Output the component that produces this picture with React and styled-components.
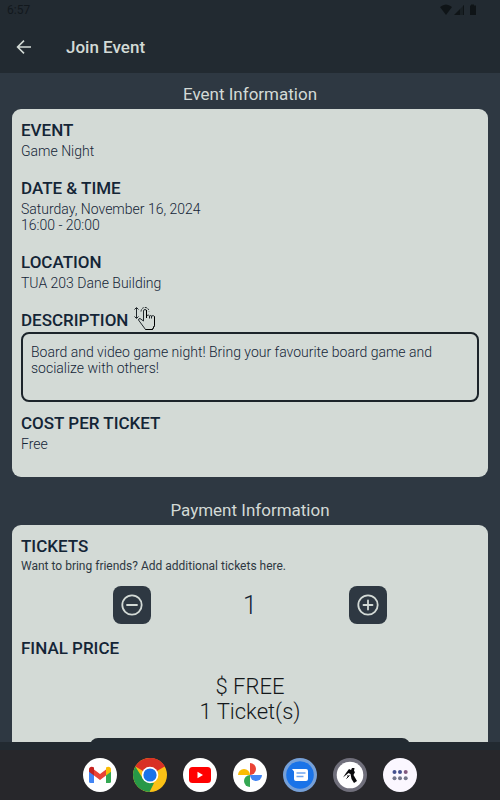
import React, { useState } from 'react'
import styled, { createGlobalStyle } from 'styled-components'

const App = () => {
    const [tickets, setTickets] = useState(1)
    return (
        <Screen>
            <GlobalStyle />
            <Header>
                <StatusBar>
                    <span>6:57</span>
                    <StatusIcons />
                </StatusBar>
                <TitleBar>
                    <BackButton type="button" aria-label="Back">
                        <svg width="16" height="16" viewBox="0 0 16 16" fill="none" stroke="#d3dad6" strokeWidth="1.6">
                            <path d="M15 8H2M8 1.6L1.6 8L8 14.4" />
                        </svg>
                    </BackButton>
                    <h1>Join Event</h1>
                </TitleBar>
            </Header>
            <Content>
                <SectionTitle>Event Information</SectionTitle>
                <Card>
                    <Label>EVENT</Label>
                    <Value>Game Night</Value>
                    <Label>DATE &amp; TIME</Label>
                    <Value>Saturday, November 16, 2024<br />16:00 - 20:00</Value>
                    <Label>LOCATION</Label>
                    <Value>TUA 203 Dane Building</Value>
                    <Label>
                        DESCRIPTION
                        <TouchCursor />
                    </Label>
                    <Description>Board and video game night! Bring your favourite board game and socialize with others!</Description>
                    <Label>COST PER TICKET</Label>
                    <Value>Free</Value>
                </Card>
                <SectionTitle>Payment Information</SectionTitle>
                <Card>
                    <Label>TICKETS</Label>
                    <Hint>Want to bring friends? Add additional tickets here.</Hint>
                    <Stepper>
                        <StepButton type="button" aria-label="Remove ticket" onClick={() => setTickets(Math.max(1, tickets - 1))}>
                            <svg width="22" height="22" viewBox="0 0 22 22" fill="none" stroke="#d3dad6" strokeWidth="1.8" strokeLinecap="round">
                                <circle cx="11" cy="11" r="9.7" />
                                <path d="M6 11H16" />
                            </svg>
                        </StepButton>
                        <Count>{tickets}</Count>
                        <StepButton type="button" aria-label="Add ticket" onClick={() => setTickets(tickets + 1)}>
                            <svg width="22" height="22" viewBox="0 0 22 22" fill="none" stroke="#d3dad6" strokeWidth="1.8" strokeLinecap="round">
                                <circle cx="11" cy="11" r="9.7" />
                                <path d="M6.500 11H15.500M11 6.500V15.500" />
                            </svg>
                        </StepButton>
                    </Stepper>
                    <Label>FINAL PRICE</Label>
                    <Total>$ FREE<br />{tickets} Ticket(s)</Total>
                    <JoinButton type="button" aria-label="Join" />
                </Card>
            </Content>
            <TabStrip />
            <Dock>
                <DockButton type="button" aria-label="Gmail"><GmailLogo /></DockButton>
                <DockButton type="button" aria-label="Chrome"><ChromeLogo /></DockButton>
                <DockButton type="button" aria-label="YouTube"><YoutubeLogo /></DockButton>
                <DockButton type="button" aria-label="Photos"><PhotosLogo /></DockButton>
                <DockButton type="button" aria-label="Messages"><MessagesLogo /></DockButton>
                <DockButton type="button" aria-label="Events"><EventsLogo /></DockButton>
                <DockButton type="button" aria-label="All apps"><AppsLogo /></DockButton>
            </Dock>
        </Screen>
    )
}

const StatusIcons = () => (
    <svg width="38" height="12" viewBox="0 0 38 12" fill="#0f1417">
        <path d="M0 3Q6 -2 12 3L6 11Z" />
        <path d="M14 11L20 5V11Z" />
        <path d="M20 5L24 1V11H20Z" opacity="0.45" />
        <path d="M23 2L24 1V11H23Z" />
        <path d="M31 0.5H34V1.5H36V11H30V1.5H31Z" />
    </svg>
)

// hand with the scroll arrow on its left
const TouchCursor = () => (
    <CursorSvg width="24" height="26" viewBox="0 0 24 26" fill="none" stroke="#20272b" strokeWidth="1">
        <path d="M2.500 2V12M0.500 3.500L2.500 1.500L4.500 3.500M0.500 10.500L2.500 12.500L4.500 10.500" />
        <path d="M7 5.500Q7.500 1.500 11 1.500Q14.500 1.500 15 5.500" strokeDasharray="2 1" />
        <path d="M9.500 15V5Q9.500 3.500 11 3.500Q12.500 3.500 12.500 5V12" fill="#d3dad6" />
        <path d="M9.500 15L6 12.500Q4.500 12.500 4.500 14L11.500 23.500H18.500L20.500 19.500V10.500Q19.500 9 17.500 10V12.500M12.500 12V9.500Q15 8.500 15.500 10V12.500M15.500 10Q17 9 17.500 10" />
        <path d="M12.500 4V12" stroke="#000" />
        <path d="M11.500 23.500H18.500L20.500 19.500V10.500" stroke="#000" />
    </CursorSvg>
)

const GmailLogo = () => (
    <svg viewBox="0 0 34 34">
        <circle cx="17" cy="17" r="17" fill="#fff" />
        <path d="M6 13V23.500Q6 25 7.500 25H11V14Z" fill="#4285f4" />
        <path d="M23 14V25H26.500Q28 25 28 23.500V13Z" fill="#34a853" />
        <path d="M11 11.500L17 16L23 11.500V17.500L17 22L11 17.500Z" fill="#ea4335" />
        <path d="M6 11.500C6 8.500 9 8 11 9.500V17.500L6 13.800Z" fill="#c5221f" />
        <path d="M28 11.500C28 8.500 25 8 23 9.500V17.500L28 13.800Z" fill="#fbbc04" />
    </svg>
)

const ChromeLogo = () => (
    <svg viewBox="0 0 34 34">
        <circle cx="17" cy="17" r="17" fill="#fbc116" />
        <path d="M17 17L2.300 8.500A17 17 0 0 1 31.700 8.500Z" fill="#d93025" />
        <path d="M17 9H32A17 17 0 0 0 17 0Z" fill="#d93025" />
        <path d="M2.300 8.500L10.100 21L17 25H21L16.500 34A17 17 0 0 1 2.300 8.500Z" fill="#279847" />
        <circle cx="17" cy="17" r="8.300" fill="#fff" />
        <circle cx="17" cy="17" r="6.600" fill="#1a73e8" />
    </svg>
)

const YoutubeLogo = () => (
    <svg viewBox="0 0 34 34">
        <circle cx="17" cy="17" r="17" fill="#fff" />
        <rect x="6" y="9" width="22" height="16" rx="3.500" fill="#f00" />
        <path d="M14.500 13.700V20.300L20 17Z" fill="#fff" />
    </svg>
)

const PhotosLogo = () => (
    <svg viewBox="0 0 34 34">
        <circle cx="17" cy="17" r="17" fill="#fff" />
        <path d="M17 5A6 6 0 0 1 17 17Z" fill="#ea4335" />
        <path d="M29 17A6 6 0 0 1 17 17Z" fill="#4285f4" />
        <path d="M17 29A6 6 0 0 1 17 17Z" fill="#34a853" />
        <path d="M5 17A6 6 0 0 1 17 17Z" fill="#fbbc04" />
    </svg>
)

const MessagesLogo = () => (
    <svg viewBox="0 0 34 34">
        <circle cx="17" cy="17" r="17" fill="#76a0d8" />
        <circle cx="17" cy="17" r="13.800" fill="#1a73e8" />
        <path d="M9 11H23Q25 11 25 13V21Q25 23 23 23H13Q11 23 11 21V13.500Z" fill="#fff" />
        <path d="M13.500 15H22.500M13.500 18.500H20.500" stroke="#6fa5ef" strokeWidth="1.400" />
    </svg>
)

const EventsLogo = () => (
    <svg viewBox="0 0 34 34">
        <circle cx="17" cy="17" r="17" fill="#706f7b" />
        <circle cx="17" cy="17" r="13.300" fill="#fff" />
        <path d="M16 11L18 12L19 10H21.500L21 13L22 14L20.500 17L24 23L21 25L18.500 21L17.500 16L15.500 15L10 19.500L13 15Z" fill="#0a0a0c" />
        <path d="M13.500 20.500L16.500 17.500M15 17V19" stroke="#0a0a0c" />
    </svg>
)

const AppsLogo = () => (
    <svg viewBox="0 0 34 34">
        <circle cx="17" cy="17" r="17" fill="#fbf7ff" />
        <circle cx="11.500" cy="14" r="2" fill="#44508f" />
        <circle cx="17" cy="14" r="2" fill="#44508f" />
        <circle cx="22.700" cy="14" r="2" fill="#82597f" />
        <circle cx="11.500" cy="20.300" r="2" fill="#74768b" />
        <circle cx="17" cy="20.300" r="2" fill="#74768b" />
        <circle cx="22.700" cy="20.300" r="2" fill="#74768b" />
    </svg>
)

//styled components
const GlobalStyle = createGlobalStyle`
* {
    box-sizing: border-box;
}
body {
    margin: 0;
    font-family: Roboto, sans-serif;
    background: #2e3842;
}
h1, h2, h3, p {
    margin: 0;
}
button {
    border: none;
    padding: 0;
    font: inherit;
    cursor: pointer;
}
`;
const Screen = styled.div`
height: 100vh;
display: flex;
flex-direction: column;
overflow: hidden;
`;
const Header = styled.header`
background: #222a31;
`;
const StatusBar = styled.div`
display: flex;
align-items: center;
justify-content: space-between;
height: 20px;
padding: 0 22px 0 7px;
font-size: 12px;
color: #12181d;
`;
const TitleBar = styled.div`
display: flex;
align-items: center;
gap: 34px;
height: 53px;
padding: 0 16px;
h1{
    font-size: 17px;
    font-weight: 500;
    color: #d3dad6;
}
`;
const BackButton = styled.button`
display: flex;
background: none;
`;
const Content = styled.main`
flex: 1;
min-height: 0;
overflow: hidden;
padding: 11px 12px 0;
`;
const SectionTitle = styled.h2`
font-size: 17px;
font-weight: 400;
line-height: 20px;
text-align: center;
color: #d3dad6;
margin-bottom: 5px;
`;
const Card = styled.section`
background: #d3dad6;
border-radius: 9px;
padding: 11px 9px 6px;
margin-bottom: 23px;
`;
const Label = styled.h3`
position: relative;
font-size: 17px;
font-weight: 500;
line-height: 20px;
color: #142536;
`;
const Value = styled.p`
font-size: 14px;
font-weight: 300;
line-height: 16px;
color: #142536;
margin: 3px 0 19px;
`;
const Description = styled.div`
min-height: 70px;
border: 2px solid #1c242a;
border-radius: 8px;
padding: 10px 8px;
margin: 2px 0 11px;
font-size: 14px;
font-weight: 300;
line-height: 16px;
color: #142536;
`;
const Hint = styled.p`
font-size: 12px;
line-height: 16px;
color: #2e3842;
margin: 2px 0 12px;
`;
const Stepper = styled.div`
display: flex;
align-items: center;
justify-content: space-around;
padding: 0 46px;
margin-bottom: 14px;
`;
const StepButton = styled.button`
display: flex;
align-items: center;
justify-content: center;
width: 38px;
height: 38px;
border-radius: 8px;
background: #2e3842;
`;
const Count = styled.output`
font-size: 25px;
font-weight: 300;
color: #142536;
`;
const Total = styled.p`
margin: 16px 0 14px;
font-size: 22px;
font-weight: 300;
line-height: 25px;
text-align: center;
color: #14181b;
`;
const JoinButton = styled.button`
display: block;
width: 70%;
height: 40px;
margin: 0 auto;
border-radius: 8px;
background: #222a31;
`;
const CursorSvg = styled.svg`
position: absolute;
left: 113px;
top: -4px;
`;
const TabStrip = styled.div`
height: 8px;
background: #222a31;
`;
const Dock = styled.nav`
display: flex;
align-items: center;
justify-content: center;
gap: 16px;
height: 50px;
background: #27272b;
`;
const DockButton = styled.button`
width: 34px;
height: 34px;
border-radius: 50%;
background: none;
svg{
    display: block;
    width: 34px;
    height: 34px;
}
`;

export default App;
